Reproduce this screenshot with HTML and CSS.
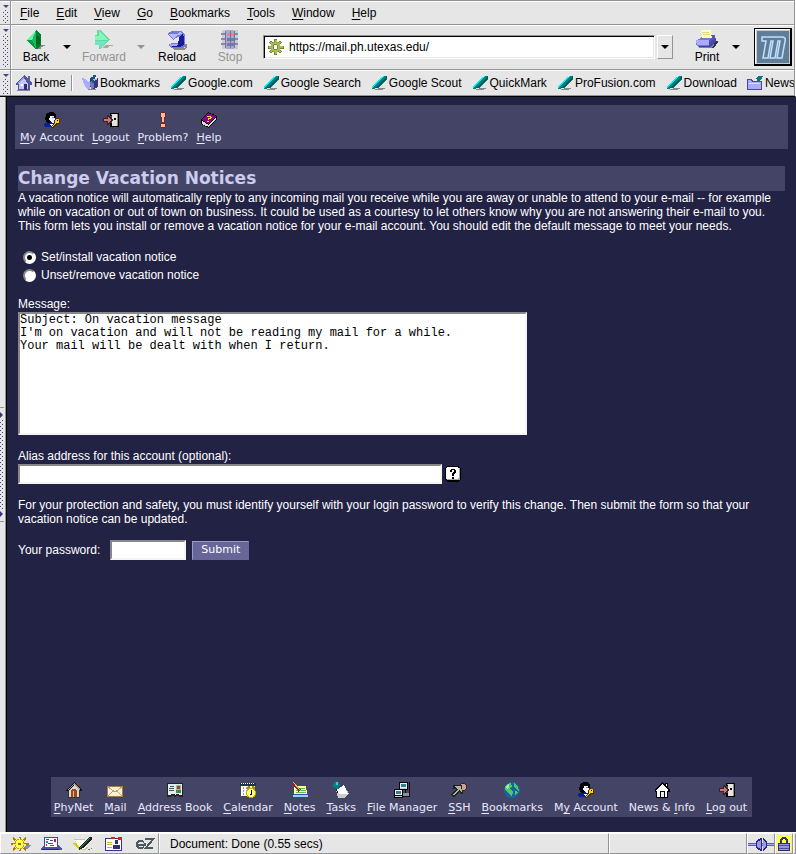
FILE: index.html
```html
<!DOCTYPE html>
<html lang="en">
<head>
<meta charset="utf-8">
<title>Change Vacation Notices</title>
<link rel="stylesheet" href="styles.css">
</head>
<body>
<svg class="defs" aria-hidden="true">
  <symbol id="pen" viewBox="0 0 17 16">
    <path d="M7 13h7v1h-2v1H4v-1h3z" fill="#888"/>
    <path d="M12 1h4v3l-9 9H4v1H1v-2l1-2h1z" fill="#008080"/>
    <path d="M12 1h1v1h-1v1h-1v1h-1v1H9v1H8v1H7v1H6v1H5v1H4v1H3v1H2v1H1v-2h1v-1h1V9h1V8h1V7h1V6h1V5h1V4h1V3h1V2h2z" fill="#00f0f0"/>
    <path d="M15 1h1v3h-1v1h-1v1h-1v1h-1v1h-1v1h-1v1H9v1H8v1H7v1H4v-1h2v-1h1v-1h1V9h1V8h1V7h1V6h1V5h1V4h1V3h1z" fill="#005858"/>
  </symbol>
  <symbol id="account" viewBox="0 0 16 16">
    <path d="M3 1h2V0h5v1h1v1h1v4h-1v4H8v2H4l-2-2V8H1V5h1V2h1z" fill="#000"/>
    <path d="M6 4h4v2h1v2h-1v3H7V9H6V8H5V6h1z" fill="#f4f4ff"/>
    <path d="M8 5h2v1H8z" fill="#77f"/>
    <path d="M1 11h3l3-1 2 2v3H1v-1H0v-2z" fill="#0020a0"/><path d="M6 12h3v2H7z" fill="#eef"/>
    <path d="M11 6h4v1h1v5h-3l-3 3v1H7v-2l3-3z" fill="#443300"/>
    <path d="M12 7h3v4h-3l-3 4H8v-1l3-3V8h1z" fill="#ffcc20"/><path d="M13 8h1v1h-1z" fill="#000"/>
  </symbol>
  <symbol id="logout" viewBox="0 0 16 16">
    <path d="M7 1h9v14H7v-4h2V4H7z" fill="#000"/>
    <path d="M8 2h7v12h-2V3H8z" fill="#8c8c88"/>
    <path d="M9 2h5v12H9z" fill="#e4e4dc"/>
    <path d="M11 6h2v2h-2z" fill="#111"/>
    <path d="M0 6h4V3h2v1h1v1h1v1h1v1h1v2H9v1H8v1H7v1H6v1H4v-3H0z" fill="#402020"/>
    <path d="M1 7h4V5h1v1h1v1h1v2H7v1H6v1H5V9H1z" fill="#c87878"/>
  </symbol>
  <symbol id="home" viewBox="0 0 16 16">
    <path d="M2 8h12v8H2z" fill="#333"/><path d="M3 8h10v7H3z" fill="#d8d8d0"/>
    <path d="M11 1h2v5h-2z" fill="#804030"/>
    <path d="M8 0l8 8v1h-2L8 3 2 9H0V8z" fill="#111"/><path d="M8 1l6 6v1L8 3 2 8V7z" fill="#999"/>
    <path d="M3 8l5-5 5 5z" fill="#d8d8d0"/>
    <path d="M5 15V9l1-2h4l1 2v6z" fill="#a04818"/><path d="M7 15V9h1v6z" fill="#f0b080"/>
  </symbol>
</svg>

<header class="chrome">
  <nav class="bar menubar" aria-label="Menu">
    <span class="grip"></span>
    <div class="menus">
      <a href="#"><u>F</u>ile</a><a href="#"><u>E</u>dit</a><a href="#"><u>V</u>iew</a><a href="#"><u>G</u>o</a><a href="#"><u>B</u>ookmarks</a><a href="#"><u>T</u>ools</a><a href="#"><u>W</u>indow</a><a href="#"><u>H</u>elp</a>
    </div>
  </nav>
  <div class="bar navbar">
    <span class="grip"></span>
    <button class="tool">
      <svg class="big" viewBox="0 0 20 20"><path d="M8 17h4l1-2h6v1h-2v1h-2v2H9z" fill="#888"/><path d="M0 10L10 0v20z" fill="#18b860"/><path d="M0 10L10 0l-4 10z" fill="#70f0a0"/><path d="M10 0l5 5v11l-4 3h-1z" fill="#008030"/><path d="M0 10h6l4 9z" fill="#00a040"/><path d="M10 5l4 2v7l-4 2z" fill="#006820"/></svg>
      <span>Back</span>
    </button>
    <button class="drop" aria-label="Back history"><i class="down"></i></button>
    <button class="tool wide off">
      <svg class="big" viewBox="0 0 20 20"><path d="M8 18h5l2-2h4v-1h-7z" fill="#aaa"/><path d="M3 0h3l10 10L6 19H5v-4H1V5h2z" fill="#66d8a0"/><path d="M5 1l10 9H1V6h4z" fill="#84f8b4"/><path d="M1 11h13l-8 7v-3H1z" fill="#70e4c4"/></svg>
      <span>Forward</span>
    </button>
    <button class="drop off" aria-label="Forward history"><i class="down"></i></button>
    <button class="tool reload">
      <svg class="big" viewBox="0 0 20 20"><path d="M5 18h13v-4h2v3l-3 3H7z" fill="#888"/><path d="M5 1h10l3 4v11l-2 2H4l-2-2v-2l4-1h5l1-2V7l-4 1-1 2L0 4z" fill="#7878d8"/><path d="M1 4h9l3-2 3 2-6 1-3 4z" fill="#b8b8ff"/><path d="M12 7l4-3 1 4v7l-4 2H3l8-2z" fill="#1818a0"/><path d="M3 14h8v1l-2 1H3z" fill="#aaf"/></svg>
      <span>Reload</span>
    </button>
    <button class="tool off">
      <svg class="big" viewBox="0 0 20 20"><path d="M2 0h16v19H2z" fill="#ccc"/><path d="M6 0h8v19H6z" fill="#a8a8d8"/><path d="M1 3h4v2H1zM1 8h4v2H1zM1 13h4v2H1zM15 3h3v2h-3zM15 8h3v2h-3zM15 13h3v2h-3z" fill="#8888b8"/><path d="M5 1h1v17H5zM14 1h1v17h-1zM10 1h1v17h-1z" fill="#7474a8"/><path d="M7 3h3v3H7zM11 3h3v3h-3z" fill="#f88080"/><path d="M7 8h3v3H7zM11 8h3v3h-3zM7 13h3v3H7zM11 13h3v3h-3z" fill="#7878a0"/></svg>
      <span>Stop</span>
    </button>
    <div class="location">
      <label class="url">
        <svg class="icon" viewBox="0 0 16 16"><g stroke="#70843c" stroke-width="3"><path d="M8 0v16M0 8h16M2.500 2.500l11 11M13.500 2.500l-11 11"/></g><g stroke="#a8c048" stroke-width="2"><path d="M8 1v14M1 8h14M3 3l10 10M13 3l-10 10"/></g><circle cx="8" cy="8" r="4.500" fill="#a8c048" stroke="#a0b840"/><circle cx="8" cy="8" r="2.500" fill="#fff" stroke="#747c68"/></svg>
        <input type="text" value="https://mail.ph.utexas.edu/" aria-label="Address">
      </label>
      <button class="open" aria-label="Show history"><i class="down"></i></button>
    </div>
    <button class="tool print">
      <svg class="big print-icon" viewBox="0 0 22 20"><path d="M11 18h7l4-6v-1h-4z" fill="#333"/><path d="M3 9l4-3h11v9l-3 3H3l-3-3v-5z" fill="#7878d0"/><path d="M0 10h13v5H1z" fill="#aaf"/><path d="M13 10l5-3 2 1v3l-5 6h-2z" fill="#4848a8"/><path d="M3 16h12v1H3z" fill="#4040a0"/><path d="M5 0h10v3h1v5H6z" fill="#ffffb8"/><path d="M6 2h7v1H6zM7 4h7v1H7z" fill="#ddd690"/><path d="M15 5h4v4h-2l-2 3h-2l3-5z" fill="#5858b8"/></svg>
      <span>Print</span>
    </button>
    <button class="drop" aria-label="Print options"><i class="down"></i></button>
    <svg class="throbber" viewBox="0 0 38 38"><path d="M0 0h38v38H0z" fill="#000"/><path d="M1 1h35v35H1z" fill="#fff"/><path d="M2 2h34v34H2z" fill="#c5cbd2"/><path d="M3 3h32v32H3z" fill="#607d98"/><path d="M8 9h20q4 0 3 4l-3 17h-5l3-17h-2l-3 17h-5l3-17h-2l-3 17H9l3-17H8z" fill="none" stroke="#c0e0ff" stroke-width="1.500"/></svg>
  </div>
  <nav class="bar linkbar" aria-label="Bookmarks">
    <span class="grip"></span>
    <a class="homelink" href="#"><svg class="icon" viewBox="0 0 17 16"><path d="M0 8l8-8 8 8v2h-2v5H2v-5H0z" fill="#55559c"/><path d="M3 9l5-6 4 6v5H3z" fill="#c4c4ff"/><path d="M1 8l7-7v2L2 9z" fill="#9c9ce0"/><path d="M12 1h2v5h-2z" fill="#6060a0"/><path d="M8 9h3v6H8z" fill="#303070"/><path d="M5 9h2v2H5z" fill="#fff"/><path d="M1 15h13v1H1z" fill="#888"/></svg>Home</a>
    <a href="#"><svg class="icon" viewBox="0 0 17 16"><path d="M8 3l4-2v5l4-3v9l-6 3-2-4z" fill="#36367c"/><path d="M0 3l4 1 2 3 2-2v10l-4-2-3-6z" fill="#aaf"/><path d="M8 7l4-2v8l-3 2z" fill="#7575c8"/><path d="M11 0h3l-2 8h-2z" fill="#086868"/><path d="M11 4h5l-4 2z" fill="#a8a8ff"/><path d="M6 14h8v1H6z" fill="#888"/></svg>Bookmarks</a>
    <a href="#"><svg class="icon"><use href="#pen"/></svg>Google.com</a>
    <a href="#"><svg class="icon"><use href="#pen"/></svg>Google Search</a>
    <a href="#"><svg class="icon"><use href="#pen"/></svg>Google Scout</a>
    <a href="#"><svg class="icon"><use href="#pen"/></svg>QuickMark</a>
    <a href="#"><svg class="icon"><use href="#pen"/></svg>ProFusion.com</a>
    <a href="#"><svg class="icon"><use href="#pen"/></svg>Download</a>
    <a href="#"><svg class="icon" viewBox="0 0 17 16"><path d="M0 4h5l1 2h9v9H0z" fill="#4a4a90"/><path d="M1 5h3l1 2h9v7H1z" fill="#aaf"/><path d="M2 8h11v1H2z" fill="#ddf"/><path d="M9 3l3-2h4l-2 4-3 2z" fill="#087878"/></svg>News</a>
  </nav>
</header>

<div class="body">
  <aside class="sidebar"><button class="splitter" aria-label="Show sidebar"><i class="right"></i><span class="dots"></span><i class="right"></i></button></aside>
  <main>
    <nav class="panel actions" aria-label="Account">
      <a href="#"><svg class="glyph"><use href="#account"/></svg><span><u>M</u>y Account</span></a>
      <a href="#"><svg class="glyph"><use href="#logout"/></svg><span><u>L</u>ogout</span></a>
      <a href="#"><svg class="glyph" viewBox="0 0 16 16"><path d="M6 0h4v1h1v4h-1v5H6V5H5V1h1z" fill="#702820"/><path d="M6 1h4v4H9v5H7V5H6z" fill="#ffb8a0"/><path d="M6 11h4v1h1v3h-1v1H6v-1H5v-3h1z" fill="#702820"/><path d="M6 12h4v3H6z" fill="#ffb8a0"/></svg><span><u>P</u>roblem?</span></a>
      <a href="#"><svg class="glyph" viewBox="0 0 16 16"><path d="M0 8l7-8 9 4v3l-8 9-8-4V9z" fill="#000"/><path d="M1 9l7 4 7-8v2l-7 8-7-3z" fill="#ddd"/><path d="M1 8l6-7 8 3-7 8z" fill="#900090"/><path d="M6 4h4v1h1v1h-1v1H8v1H7V6h2V5H6zM6 9h2v1H6z" fill="#ffe020"/></svg><span><u>H</u>elp</span></a>
    </nav>

    <form class="content">
      <h1>Change Vacation Notices</h1>
      <p>A vacation notice will automatically reply to any incoming mail you receive while you are away or unable to attend to your e-mail -- for example while on vacation or out of town on business. It could be used as a courtesy to let others know why you are not answering their e-mail to you. This form lets you install or remove a vacation notice for your e-mail account. You should edit the default message to meet your needs.</p>
      <div class="choices">
        <label><input type="radio" name="mode" checked>Set/install vacation notice</label>
        <label><input type="radio" name="mode">Unset/remove vacation notice</label>
      </div>
      <label class="caption" for="message">Message:</label>
      <textarea id="message">Subject: On vacation message
I'm on vacation and will not be reading my mail for a while.
Your mail will be dealt with when I return.</textarea>
      <label class="caption" for="alias">Alias address for this account (optional):</label>
      <div class="row">
        <input id="alias" class="field" type="text">
        <button type="button" class="hint" aria-label="Help on alias address"><svg viewBox="0 0 16 16"><path d="M2 0h12v1h1v1h1v12h-1v1h-1v1H2v-1H1v-1H0V2h1V1h1z" fill="#000"/><path d="M2 1h11v1h1v11h-1v1H2v-1H1V2h1z" fill="#fff"/><path d="M2 13h11v-1h1V2h1v12H2z" fill="#aaa"/><path d="M5 5V4h1V3h4v1h1v3h-1v1H9v2H7V7h1V6h1V4H7v2H5zM7 11h2v2H7z" fill="#000"/></svg></button>
      </div>
      <p class="safety">For your protection and safety, you must identify yourself with your login password to verify this change. Then submit the form so that your vacation notice can be updated.</p>
      <div class="row">
        <label for="password">Your password:</label>
        <input id="password" class="field short" type="password">
        <button type="submit" class="submit">Submit</button>
      </div>
    </form>

    <nav class="panel apps" aria-label="Applications">
      <a href="#"><svg class="glyph"><use href="#home"/></svg><span><u>P</u>hyNet</span></a>
      <a href="#"><svg class="glyph" viewBox="0 0 16 16"><path d="M0 4h16v11H0z" fill="#a87848"/><path d="M1 5h14v9H1z" fill="#fff0d8"/><path d="M1 5l7 5 7-5M1 14l5-5M15 14l-5-5" fill="none" stroke="#d09c70"/></svg><span><u>M</u>ail</span></a>
      <a href="#"><svg class="glyph" viewBox="0 0 16 16"><path d="M0 1h16v14h-4l-1-1h-2l-1 1H7l-1-1H4l-1 1H0z" fill="#222"/><path d="M1 2h14v11h-3l-1-1H9l-1 1-1-1H4l-1 1H1z" fill="#e0ece8"/><path d="M3 4h4v1H3zM2 6h5v1H2zM2 8h5v1H2z" fill="#456"/><path d="M9 3h5v8H9z" fill="#98c0a0"/><path d="M10 4h3v3h-3z" fill="#a04020"/><path d="M9 8h5v3H9z" fill="#508050"/></svg><span><u>A</u>ddress Book</span></a>
      <a href="#"><svg class="glyph" viewBox="0 0 16 16"><path d="M1 1h14v13H1z" fill="#fff"/><path d="M0 1h16v3H0z" fill="#234"/><path d="M1 1.500h14" stroke="#fff" stroke-dasharray="1 1"/><path d="M3.500 5v8M6.500 5v8M9.500 5v3M12.500 5v2" stroke="#99a" stroke-dasharray="2 1"/><path d="M7 6l2-1v2M15 6l-2-1v2" stroke="#aa8800" stroke-width="2"/><circle cx="11" cy="11" r="4.500" fill="#ffff80" stroke="#c8b000"/><path d="M11.500 8v4H10" fill="none" stroke="#000"/></svg><span><u>C</u>alendar</span></a>
      <a href="#"><svg class="glyph" viewBox="0 0 16 16"><path d="M2 5h12l2 9H2z" fill="#3850c0"/><path d="M2 4h12l1 8H2z" fill="#ffffa0"/><path d="M4 6.500h9M4 8.500h10M4 10.500h10" stroke="#60c050"/><path d="M1 1l7 8" stroke="#803020" stroke-width="3"/><path d="M1 0l8 9" stroke="#ffb060"/><path d="M1 13h15v2H1z" fill="#9cd0ef"/></svg><span><u>N</u>otes</span></a>
      <a href="#"><svg class="glyph" viewBox="0 0 16 16"><path d="M3 8l8-5 5 9-5 4H5z" fill="#ccc"/><path d="M3 8l8-5 4 9H6z" fill="#fff"/><path d="M1 0h5l1 3-2 2 1 2H3L2 5H0z" fill="#078080"/><path d="M3 0h2v3H3z" fill="#30d0d0"/><path d="M3 7l2 4" stroke="#111"/></svg><span><u>T</u>asks</span></a>
      <a href="#"><svg class="glyph" viewBox="0 0 16 16"><path d="M5 0h9v8H5zM0 7h9v9H0z" fill="#000"/><path d="M6 1h7v5H6zM1 8h7v5H1z" fill="#e8f4ee"/><path d="M7 2h5v3H7zM2 9h5v3H2z" fill="#308098"/><path d="M6 6.500h7M1 14.500h7" stroke="#ccc"/><path d="M15.500 0v14H9M11 8v7" fill="none" stroke="#101010"/><path d="M9 11h6v3H9z" fill="#909090"/></svg><span><u>F</u>ile Manager</span></a>
      <a href="#"><svg class="glyph" viewBox="0 0 16 16"><circle cx="12" cy="5" r="4" fill="#422"/><circle cx="12" cy="5" r="3" fill="#d0a098"/><path d="M2 3h9l1 9h-2l-2-2-5 6-3-3 5-6H2z" fill="#222"/><path d="M3 4h7l1 6-3-2-5 6-1-1 5-6z" fill="#a8b898"/></svg><span><u>S</u>SH</span></a>
      <a href="#"><svg class="glyph" viewBox="0 0 16 16"><circle cx="8" cy="8" r="8" fill="#1464a8"/><path d="M3 2l4-1 1 3-2 3 3 2-1 6-3-4-4-3V5zM10 1l4 3 1 5-3-2-2-3zM11 9l3 1-3 4z" fill="#54c464"/><path d="M2 4l3-2v3L3 8z" fill="#a0e8b0"/></svg><span><u>B</u>ookmarks</span></a>
      <a href="#"><svg class="glyph"><use href="#account"/></svg><span>M<u>y</u> Account</span></a>
      <a href="#"><svg class="glyph" viewBox="0 0 16 16"><path d="M8 0l3 3V1h3v5l2 2v2h-2v6H2v-6H1V8z" fill="#000"/><path d="M8 2l6 6v1h-1v6h-2V9H6v6H3V9H2V8zM12 2h1v3l-1-1z" fill="#fff"/><path d="M7 10h3v5H7z" fill="#eee"/></svg><span>News &amp; <u>I</u>nfo</span></a>
      <a href="#"><svg class="glyph"><use href="#logout"/></svg><span><u>L</u>og out</span></a>
    </nav>
  </main>
</div>

<footer class="status">
  <div class="cell tasks">
    <svg viewBox="0 0 22 14"><path d="M12 12h5l5-4h-6z" fill="#8888cc"/><path d="M9.500 0v14M1 7h18M3 1l13 12M16 1L3 13" stroke="#aa7c00" stroke-width="2"/><circle cx="9.500" cy="7" r="4.500" fill="#ffff50" stroke="#c8a000"/><path d="M9.500 1v12M3 7.500h13M5 3l9 8M14 3l-9 8" stroke="#ffff40"/><circle cx="9.500" cy="7" r="1.500" fill="#997700"/></svg>
    <svg viewBox="0 0 22 14"><path d="M0 11l3-3h14l4 3v2H0z" fill="#5050a8"/><path d="M3 0h14v10H3z" fill="#4444a0"/><path d="M4 1h12v9H4z" fill="#fff"/><path d="M5 2h3v1H5zM9 3h3v1H9zM7 6h5v1H7zM9 8h4v1H9z" fill="#4848c0"/><path d="M13 2h2v3h-2zM5 7h1v2H5z" fill="#e01020"/><path d="M5 4h2v2H5z" fill="#00a080"/><path d="M1 12h17v1H1z" fill="#24246c"/></svg>
    <svg viewBox="0 0 22 14"><path d="M2 2h11l3 9-3 2H7z" fill="#c8c8a0"/><path d="M3 3h10l2 7-3 2H8z" fill="#fffff0"/><path d="M1 6l5 6 3-1-6-5z" fill="#d8c800"/><path d="M17 0h3v2l-9 9-4 2v-3z" fill="#222"/><path d="M17 1h1l-8 9-2 1v-1z" fill="#208870"/><path d="M12 13h5l3-3v2z" fill="#777"/></svg>
    <svg viewBox="0 0 22 14"><path d="M2 1h17v13H2z" fill="#34348c"/><path d="M3 2h15v11H3z" fill="#fff"/><path d="M8 0h4v2H8zM15 0h4v3h-4z" fill="#e02020"/><path d="M4 5.500h5M4 7.500h5M4 10.500h5" stroke="#c8b420"/><path d="M12 3h3v4h-3zM10 8h7v4h-7z" fill="#30306c"/></svg>
    <svg viewBox="0 0 22 14"><path d="M10 5L8 4H5L3 6v3l2 2h3l2-1M4 8h7V6M11 2h8l-7 9h7" fill="none" stroke="#4c5a60" stroke-width="2"/></svg>
  </div>
  <div class="cell message">Document: Done (0.55 secs)</div>
  <div class="cell progress"></div>
  <div class="cell online"><svg viewBox="0 0 26 14"><path d="M0 6h26v3H0z" fill="#5c5cb0"/><path d="M0 7.500h26" stroke="#aaf"/><path d="M8 4l5-3h1v13h-1l-5-3zM15 1l4 3v7l-4 3z" fill="#282870"/><path d="M9 5l4-2v9l-4-2zM15 3l3 2v5l-3 2z" fill="#9898ee"/></svg></div>
  <div class="cell lock"><svg viewBox="0 0 14 16"><path d="M0 0h14v16H0z" fill="#ffff50"/><path d="M4 8V4l2-2h2l2 2v4" fill="none" stroke="#333370" stroke-width="2"/><path d="M1 7h12v8H1z" fill="#303070"/><path d="M2 8h10v6H2z" fill="#9494e8"/><path d="M2 9.500h10M2 12.500h10" stroke="#5050a0"/></svg></div>
  <div class="cell end"></div>
</footer>
</body>
</html>
```
FILE: styles.css
```css
* { box-sizing: border-box; }
body {
  margin: 0;
  min-height: 100vh;
  display: flex;
  flex-direction: column;
  overflow-x: hidden;
  background: #e6e6e6;
  color: #000;
  font: 12px/14px "Liberation Sans", Arial, sans-serif;
}
a { color: inherit; text-decoration: none; }
u { text-underline-offset: 2px; text-decoration-thickness: 1px; }
button, input, textarea { font: inherit; color: inherit; margin: 0; padding: 0; border: 0; border-radius: 0; }
button { background: none; }
svg { display: block; flex: none; shape-rendering: crispEdges; }
.defs { position: absolute; width: 0; height: 0; }

/* Browser chrome */
.chrome { border-right: 1px solid #fff; border-bottom: 1px solid #000; }
.bar {
  display: flex;
  align-items: center;
  border-top: 1px solid #949494;
  border-right: 1px solid #949494;
  box-shadow: inset 0 1px #fff;
}
.grip {
  align-self: stretch;
  flex: none;
  width: 12px;
  padding: 4px 0 2px 3px;
  border-right: 1px solid #fff;
  box-shadow: inset -1px 0 #949494, inset 0 1px #fff;
}
.grip::before {
  content: "";
  display: block;
  width: 6px;
  height: 3px;
  background: #444488;
  clip-path: polygon(0 0, 100% 0, 50% 100%);
}
.grip::after {
  content: "";
  display: block;
  width: 5px;
  height: calc(100% - 4px);
  margin-top: 2px;
}
.grip::after, .dots {
  background:
    conic-gradient(from 270deg at 1px 1px, #444488 90deg, transparent 0) 0 2px / 4px 4px,
    conic-gradient(from 270deg at 1px 1px, #444488 90deg, transparent 0) 2px 0 / 4px 4px;
}
.menubar { height: 24px; }
.menus { display: flex; gap: 17px; padding: 0 8px; }
.navbar { height: 45px; padding-right: 2px; }
.linkbar { height: 27px; gap: 10px; overflow: hidden; border-bottom: 1px solid #949494; white-space: nowrap; }
.linkbar a { display: flex; align-items: center; gap: 1px; flex: none; }
.linkbar .homelink { margin-left: -6px; padding-right: 5px; border-right: 1px solid #949494; box-shadow: 1px 0 #fff; }
.icon { width: 17px; height: 16px; }

.tool { display: flex; flex-direction: column; align-items: center; flex: none; width: 48px; }
.tool span { line-height: 14px; }
.tool.wide { width: 60px; }
.tool.reload { width: 58px; }
.tool.print { width: 44px; margin-left: 12px; }
.big { width: 20px; height: 20px; }
.print-icon { width: 22px; }
.off { color: #949494; }
.drop { flex: none; width: 14px; height: 20px; padding: 0 3px; }
.down { display: block; width: 8px; height: 4px; background: currentColor; clip-path: polygon(0 0, 100% 0, 50% 100%); }
.location { flex: 1; display: flex; align-items: center; gap: 2px; margin-left: 9px; }
.url {
  flex: 1;
  min-width: 0;
  display: flex;
  align-items: center;
  gap: 5px;
  height: 24px;
  padding-left: 3px;
  background: #fff;
  border: 1px solid #949494;
  border-right-color: #fff;
  border-bottom-color: #fff;
  box-shadow: inset 1px 1px #000, inset -1px -1px #e6e6e6;
}
.url input { flex: 1; min-width: 0; background: none; outline: 0; }
.open { width: 16px; height: 24px; padding: 0 3px; border: 1px solid; border-color: #fff #949494 #949494 #fff; }
.throbber { width: 38px; height: 38px; margin-left: 11px; shape-rendering: auto; }

/* Page area */
.body { flex: 1; display: flex; }
.sidebar { flex: none; display: flex; align-items: center; width: 7px; border-right: 1px solid #000; box-shadow: inset -1px 0 #949494; }
.splitter { display: flex; flex-direction: column; align-items: flex-start; justify-content: space-between; width: 4px; height: 115px; padding: 4px 0; border: solid #949494; border-width: 1px 0; }
.right { width: 3px; height: 6px; background: #333377; clip-path: polygon(0 0, 100% 50%, 0 100%); }
.dots { width: 3px; height: 90px; }
main {
  flex: 1;
  min-width: 0;
  display: flex;
  flex-direction: column;
  padding: 8px 8px 15px;
  background: #222244;
  color: #fff;
}
.panel { display: flex; background: #444466; color: #e8e8ff; font: 11px/14px "DejaVu Sans", Verdana, sans-serif; }
.panel a { display: flex; flex-direction: column; align-items: center; gap: 3px; white-space: nowrap; }
.glyph { width: 16px; height: 16px; }
.actions { gap: 8px; height: 44px; padding: 7px 5px 0; }
.apps { gap: 11px; align-self: center; height: 40px; margin-top: auto; padding: 5px 5px 0 3px; }

.content { padding: 17px 3px 0; }
h1 { margin: 0; background: #444466; color: #ccccee; font: bold 17px/25px "DejaVu Sans", Verdana, sans-serif; }
p { margin: 0; }
.choices { margin: 15px 0 12px; padding-left: 5px; }
.choices label { display: flex; align-items: center; gap: 5px; height: 18px; }
input[type="radio"] {
  appearance: none;
  width: 13px;
  height: 13px;
  border: 2px solid;
  border-color: #888 #fff #fff #888;
  border-radius: 50%;
  background: #fff;
}
input[type="radio"]:checked { background: radial-gradient(circle, #000 2px, #fff 3px); }
.caption { display: block; line-height: 16px; }
textarea, .field {
  display: block;
  background: #fff;
  color: #000;
  border: 2px solid;
  border-color: #888 #f4f4f4 #f4f4f4 #888;
  outline: 0;
}
textarea { width: 509px; max-width: 100%; height: 123px; margin-bottom: 13px; resize: none; font: 12px/13px "Liberation Mono", "Courier New", monospace; }
.row { display: flex; align-items: center; }
.field { width: 424px; height: 20px; }
.field.short { width: 76px; margin: 0 6px 0 10px; }
.hint { margin-left: 3px; }
.hint svg { width: 16px; height: 16px; }
.safety { margin: 14px 0; }
.submit {
  width: 57px;
  height: 19px;
  background: #666699;
  border: 1px solid;
  border-color: #9999cc #666699 #666699 #9999cc;
  font: 11px/14px "DejaVu Sans", Verdana, sans-serif;
}

/* Status bar */
.status { display: flex; height: 22px; border-top: 1px solid #fff; }
.cell { display: flex; align-items: center; border: 1px solid; border-color: #fff #949494 #949494 #fff; }
.tasks { gap: 9px; width: 159px; padding-left: 9px; }
.tasks svg { width: 22px; height: 14px; }
.message { flex: 1; padding-left: 10px; }
.progress { width: 138px; }
.online { width: 28px; }
.online svg { width: 26px; height: 14px; }
.lock { width: 18px; padding-left: 1px; }
.lock svg { width: 14px; height: 16px; }
.end { width: 3px; }
```
